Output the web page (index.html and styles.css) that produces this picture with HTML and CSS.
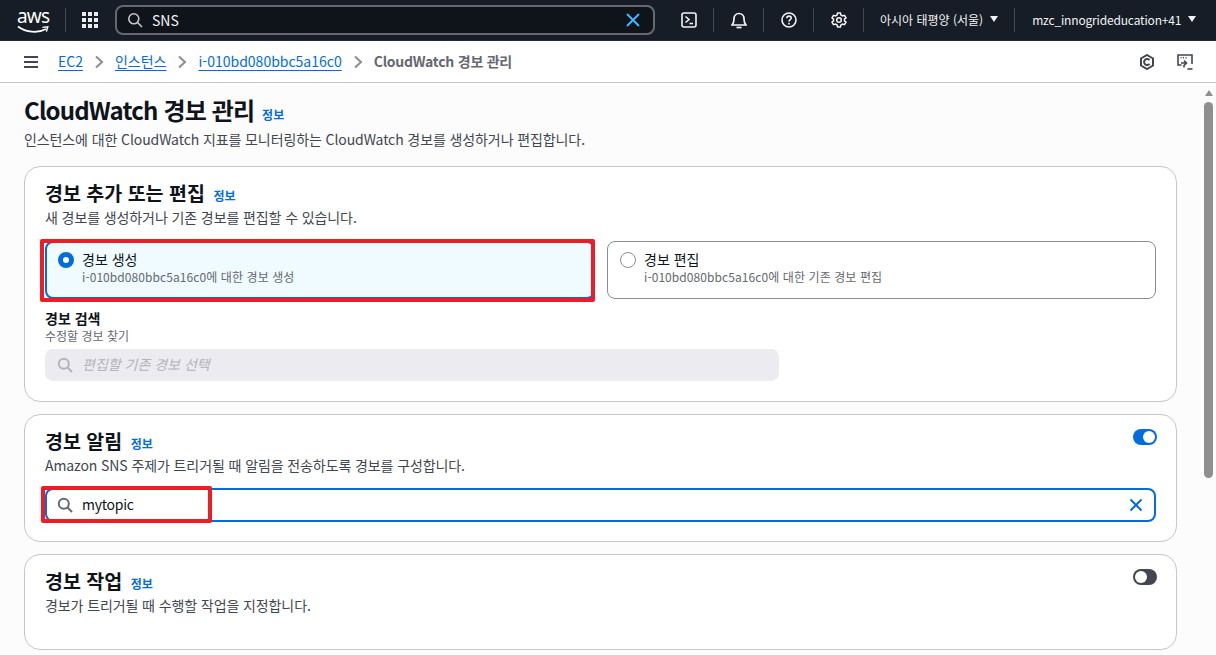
FILE: index.html
```html
<!DOCTYPE html>
<html lang="ko">
<head>
<meta charset="utf-8">
<title>CloudWatch 경보 관리</title>
<link rel="stylesheet" href="styles.css">
</head>
<body>
<header class="topbar">
  <div class="aws-logo">
    <span class="aws-word">aws</span>
    <svg class="aws-smile" width="32" height="10" viewBox="0 0 32 10"><path d="M1 1.5C9 7.5 21 8.5 29 4" fill="none" stroke="#fff" stroke-width="1.7"/><path d="M25.5 2.4L30.8 1.8L29.4 6.6" fill="none" stroke="#fff" stroke-width="1.4"/></svg>
  </div>
  <span class="tsep sep-logo"></span>
  <svg class="grid-ico" width="16" height="16" viewBox="0 0 16 16" fill="#e9ebed"><rect x="0" y="0" width="4" height="4"/><rect x="6" y="0" width="4" height="4"/><rect x="12" y="0" width="4" height="4"/><rect x="0" y="6" width="4" height="4"/><rect x="6" y="6" width="4" height="4"/><rect x="12" y="6" width="4" height="4"/><rect x="0" y="12" width="4" height="4"/><rect x="6" y="12" width="4" height="4"/><rect x="12" y="12" width="4" height="4"/></svg>
  <div class="global-search">
    <svg width="16" height="16" viewBox="0 0 16 16" fill="none" stroke="#c6c6cd" stroke-width="1.6"><circle cx="6.8" cy="6.8" r="5"/><path d="M10.5 10.5L15 15"/></svg>
    <span class="gs-text">SNS</span>
    <svg class="gs-x" width="16" height="16" viewBox="0 0 16 16" fill="none" stroke="#42b4ff" stroke-width="2"><path d="M2 2L14 14M14 2L2 14"/></svg>
  </div>
  <div class="top-icons">
    <svg class="ti" width="16" height="16" viewBox="0 0 16 16" fill="none" stroke="#f3f3f7" stroke-width="1.6"><rect x="1" y="1" width="14" height="14" rx="2"/><path d="M4.5 4.5L8 7.5L4.5 10.5M8.5 11.5H12"/></svg>
    <span class="tsep"></span>
    <svg class="ti" width="16" height="17" viewBox="0 0 16 17" fill="none" stroke="#f3f3f7" stroke-width="1.7"><path d="M1 13H15C13 11 13 9.5 13 7C13 4 11 1.5 8 1.5C5 1.5 3 4 3 7C3 9.5 3 11 1 13Z"/><path d="M5.5 15.5H10.5"/></svg>
    <span class="tsep"></span>
    <svg class="ti" width="16" height="16" viewBox="0 0 16 16" fill="none" stroke="#f3f3f7" stroke-width="1.6"><circle cx="8" cy="8" r="7"/><path d="M5.8 6.2C5.8 4.9 6.8 4.1 8 4.1C9.3 4.1 10.2 4.9 10.2 6C10.2 7.5 8 7.6 8 9.5"/><path d="M8 10.8V12.4"/></svg>
    <span class="tsep"></span>
    <svg class="ti" width="16" height="16" viewBox="0 0 16 16" fill="none" stroke="#f3f3f7" stroke-width="1.5"><path d="M6.6 1H9.4L9.9 3L11.5 3.9L13.5 3.3L15 5.8L13.5 7.2V8.8L15 10.2L13.5 12.7L11.5 12.1L9.9 13L9.4 15H6.6L6.1 13L4.5 12.1L2.5 12.7L1 10.2L2.5 8.8V7.2L1 5.8L2.5 3.3L4.5 3.9L6.1 3Z"/><circle cx="8" cy="8" r="2.3"/></svg>
    <span class="tsep"></span>
    <span class="tmenu region">아시아 태평양 (서울)<i class="caret"></i></span>
    <span class="tsep"></span>
    <span class="tmenu account">mzc_innogrideducation+41<i class="caret"></i></span>
  </div>
</header>

<nav class="crumbbar">
  <svg class="menu-ico" width="16" height="14" viewBox="0 0 16 14" fill="none" stroke="#424650" stroke-width="2"><path d="M1 2H15M1 7H15M1 12H15"/></svg>
  <a class="crumb">EC2</a>
  <svg class="chev" width="10" height="14" viewBox="0 0 10 14" fill="none" stroke="#8c8c94" stroke-width="2"><path d="M2 1.5L8 7L2 12.5"/></svg>
  <a class="crumb">인스턴스</a>
  <svg class="chev" width="10" height="14" viewBox="0 0 10 14" fill="none" stroke="#8c8c94" stroke-width="2"><path d="M2 1.5L8 7L2 12.5"/></svg>
  <a class="crumb">i-010bd080bbc5a16c0</a>
  <svg class="chev" width="10" height="14" viewBox="0 0 10 14" fill="none" stroke="#8c8c94" stroke-width="2"><path d="M2 1.5L8 7L2 12.5"/></svg>
  <span class="crumb-cur">CloudWatch 경보 관리</span>
  <div class="crumb-icons">
    <svg width="16" height="16" viewBox="0 0 16 16" fill="none" stroke="#424650" stroke-width="2"><path d="M8 1L14 4.5V11.5L8 15L2 11.5V4.5Z"/><path d="M10.5 6.2A3 3 0 1 0 10.5 9.8"/></svg>
    <svg width="16" height="16" viewBox="0 0 16 16" fill="none" stroke="#424650" stroke-width="1.6"><path d="M4.5 11H1V1H15V10"/><path d="M3.5 3.7H4.5M6 3.7H7M8.5 3.7H9.5"/><path d="M4 9H9M7 6.5L9.5 9L7 11.5M7 13.5V11"/><path d="M10.5 15H15.5"/></svg>
  </div>
</nav>

<div class="viewport">
  <main class="content">
    <div class="page-head">
      <h1>CloudWatch 경보 관리 <a class="info info-h1">정보</a></h1>
      <p class="desc">인스턴스에 대한 CloudWatch 지표를 모니터링하는 CloudWatch 경보를 생성하거나 편집합니다.</p>
    </div>

    <section class="card card-a">
      <h2>경보 추가 또는 편집 <a class="info">정보</a></h2>
      <p class="desc sub">새 경보를 생성하거나 기존 경보를 편집할 수 있습니다.</p>
      <div class="tiles">
        <div class="tile selected">
          <span class="radio on"></span>
          <div>
            <div class="tile-title">경보 생성</div>
            <div class="tile-sub">i-010bd080bbc5a16c0에 대한 경보 생성</div>
          </div>
          <span class="annot annot-tile"></span>
        </div>
        <div class="tile">
          <span class="radio"></span>
          <div>
            <div class="tile-title">경보 편집</div>
            <div class="tile-sub">i-010bd080bbc5a16c0에 대한 기존 경보 편집</div>
          </div>
        </div>
      </div>
      <div class="field-label">경보 검색</div>
      <div class="field-hint">수정할 경보 찾기</div>
      <div class="disabled-search">
        <svg width="16" height="16" viewBox="0 0 16 16" fill="none" stroke="#b4b4bb" stroke-width="2"><circle cx="6.8" cy="6.8" r="5"/><path d="M10.5 10.5L15 15"/></svg>
        <span class="ph-text">편집할 기존 경보 선택</span>
      </div>
    </section>

    <section class="card card-b">
      <div class="toggle on"></div>
      <h2>경보 알림 <a class="info">정보</a></h2>
      <p class="desc sub">Amazon SNS 주제가 트리거될 때 알림을 전송하도록 경보를 구성합니다.</p>
      <div class="topic-search">
        <svg width="16" height="16" viewBox="0 0 16 16" fill="none" stroke="#656871" stroke-width="2"><circle cx="6.8" cy="6.8" r="5"/><path d="M10.5 10.5L15 15"/></svg>
        <span class="topic-text">mytopic</span>
        <svg class="topic-x" width="16" height="16" viewBox="0 0 16 16" fill="none" stroke="#006ce0" stroke-width="2"><path d="M2.5 2.5L13.5 13.5M13.5 2.5L2.5 13.5"/></svg>
        <span class="annot annot-topic"></span>
      </div>
    </section>

    <section class="card card-c">
      <div class="toggle"></div>
      <h2>경보 작업 <a class="info">정보</a></h2>
      <p class="desc sub">경보가 트리거될 때 수행할 작업을 지정합니다.</p>
    </section>
  </main>
  <div class="scrollbar">
    <span class="sb-up"></span>
    <span class="sb-thumb"></span>
  </div>
</div>
</body>
</html>
```

FILE: styles.css
```css
* { box-sizing: border-box; }
html, body { margin: 0; height: 100%; overflow: hidden; }
body {
  font-family: "Noto Sans CJK KR", "Noto Sans", sans-serif;
  font-size: 14px;
  color: #0f141a;
  background: #fcfcfd;
}
svg { flex: none; display: block; }

.topbar {
  height: 41px;
  background: #161d26;
  display: flex;
  align-items: center;
  padding-left: 17px;
  border-bottom: 1px solid #232b37;
}
.aws-logo { width: 32px; height: 30px; position: relative; color: #fff; }
.aws-word { position: absolute; left: 0; top: -1px; font-family: "Noto Sans", sans-serif; font-size: 19px; line-height: 24px; letter-spacing: -0.8px; }
.aws-smile { position: absolute; left: 0; top: 20px; }
.tsep { width: 1px; height: 24px; background: #424650; flex: none; }
.sep-logo { margin-left: 16px; }
.grid-ico { margin-left: 16px; }
.global-search {
  margin-left: 17px;
  width: 540px;
  height: 30px;
  background: #0f141a;
  border: 2px solid #656871;
  border-radius: 8px;
  display: flex;
  align-items: center;
  padding-left: 10px;
  padding-right: 12px;
}
.gs-text { margin-left: 9px; color: #f3f3f7; font-size: 14px; }
.gs-x { margin-left: auto; }
.top-icons { display: flex; align-items: center; margin-left: 26px; }
.ti { margin: 0 16px 0 0; }
.top-icons .tsep { margin-right: 17px; }
.tmenu { color: #f3f3f7; font-size: 12px; display: flex; align-items: center; white-space: nowrap; padding-bottom: 2px; }
.region { margin-right: 16px; margin-left: -1px; }
.account { letter-spacing: -0.17px; }
.caret { width: 0; height: 0; border-left: 4px solid transparent; border-right: 4px solid transparent; border-top: 6px solid #f3f3f7; margin-left: 7px; }

.crumbbar {
  height: 42px;
  background: #fff;
  border-bottom: 1px solid #c6c6cd;
  display: flex;
  align-items: center;
  padding-left: 23px;
  padding-right: 23px;
  font-size: 14px;
}
.menu-ico { margin-right: 19px; }
.crumb { color: #006ce0; text-decoration: underline; text-underline-offset: 3px; white-space: nowrap; padding-bottom: 2px; }
.chev { margin: 0 11px; }
.crumb-cur { color: #656871; font-weight: 700; font-size: 14px; letter-spacing: -0.25px; white-space: nowrap; padding-bottom: 2px; }
.crumb-icons { margin-left: auto; display: flex; gap: 22px; align-items: center; }

.viewport { display: flex; height: 573px; }
.content { width: 1203px; padding: 12px 26px 0 24px; flex: none; }
.scrollbar { width: 13px; position: relative; background: #fcfcfd; }
.sb-up { position: absolute; left: 2px; top: 7px; border-left: 4.5px solid transparent; border-right: 4.5px solid transparent; border-bottom: 6px solid #8f8f8f; }
.sb-thumb { position: absolute; left: 1px; top: 19px; width: 9px; height: 376px; background: #8f8f8f; border-radius: 5px; }

h1 { margin: 0; font-size: 24px; line-height: 30px; font-weight: 700; letter-spacing: -0.85px; }
h2 { margin: 0; height: 26px; font-size: 19.5px; line-height: 24px; font-weight: 700; }
.info { color: #006ce0; font-size: 12px; font-weight: 700; margin-left: 3px; vertical-align: 0; letter-spacing: 0; }
.info-h1 { margin-left: 2px; }
.desc { margin: 0; color: #424650; font-size: 14px; line-height: 20px; letter-spacing: -0.1px; }
.page-head { height: 71px; }
.page-head .desc { margin-top: -1px; }
.sub { margin-top: 0; }

.card {
  background: #fff;
  border: 1px solid #c6c6cd;
  border-radius: 16px;
  padding: 14px 20px 0;
  margin-bottom: 12px;
  position: relative;
}
.card-a { height: 236px; }
.card-b { height: 128px; }
.card-c { height: 96px; }

.tiles { display: flex; gap: 12px; margin-top: 14px; }
.tile {
  flex: 1;
  height: 58px;
  border: 1px solid #8c8c94;
  border-radius: 8px;
  padding: 7px 12px 0 12px;
  display: flex;
  gap: 8px;
  position: relative;
  background: #fff;
}
.tile.selected { background: #f0fbff; border: 2px solid #006ce0; padding: 6px 12px 0 11px; }
.radio { width: 16px; height: 16px; border: 1.5px solid #8c8c94; border-radius: 50%; margin-top: 3px; flex: none; background: #fff; }
.radio.on { border: 5px solid #006ce0; }
.tile-title { font-size: 14px; line-height: 20px; color: #0f141a; }
.tile-sub { font-size: 12px; line-height: 16px; color: #656871; letter-spacing: 0.08px; }

.annot { position: absolute; border: 4px solid #ee1c25; border-radius: 2px; pointer-events: none; }
.annot-tile { left: -7px; top: -4px; width: 555px; height: 63px; }
.annot-topic { left: -6px; top: -4px; width: 171px; height: 37px; }

.field-label { margin-top: 9px; font-size: 14px; line-height: 20px; font-weight: 700; }
.field-hint { font-size: 12px; line-height: 15px; color: #656871; }
.disabled-search {
  margin-top: 6px;
  width: 734px;
  height: 32px;
  background: #ebebf0;
  border-radius: 8px;
  display: flex;
  align-items: center;
  padding-left: 12px;
  gap: 9px;
  color: #b4b4bb;
  font-size: 14px;
  font-style: italic;
}
.ph-text { padding-bottom: 2px; }

.toggle { position: absolute; top: 14px; right: 19px; width: 24px; height: 16px; border-radius: 8px; background: #424650; }
.toggle::after { content: ""; position: absolute; top: 2px; left: 2px; width: 12px; height: 12px; border-radius: 50%; background: #fff; }
.toggle.on { background: #006ce0; }
.toggle.on::after { left: 10px; }

.topic-search {
  margin-top: 13px;
  height: 34px;
  border: 2px solid #006ce0;
  border-radius: 8px;
  display: flex;
  align-items: center;
  padding-left: 10px;
  padding-right: 10px;
  position: relative;
}
.topic-text { margin-left: 9px; font-size: 14px; color: #0f141a; letter-spacing: -0.25px; padding-bottom: 2px; }
.topic-x { margin-left: auto; }
```
